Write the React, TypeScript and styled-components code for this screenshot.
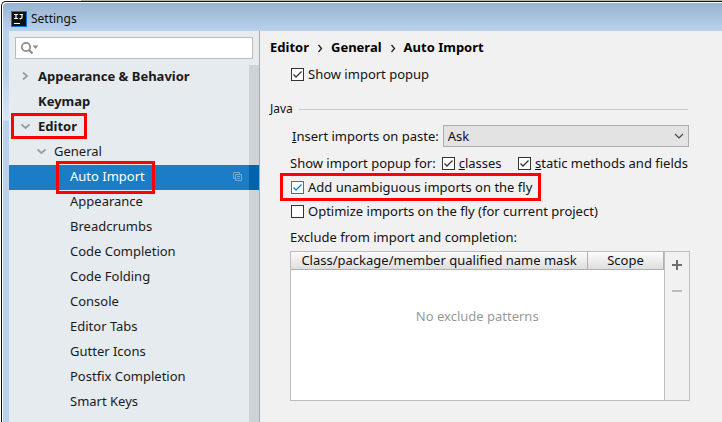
import React from "react";
import styled, { createGlobalStyle } from "styled-components";

const Global = createGlobalStyle`
  *, *::before, *::after { box-sizing: border-box; }
  html, body, #root { height: 100%; }
  body { margin: 0; overflow: hidden; background: #fff; }
  body, button, input, select, table { font: 13px/18px "Noto Sans", "Open Sans", sans-serif; color: #111; }
`;

const Desktop = styled.div`
  height: 100%;
  padding: 1px 0 0 1px;
  background: linear-gradient(90deg, #fff 81px, #b4bab2 81px);
`;

const Window = styled.div`
  display: flex;
  flex-direction: column;
  height: 100%;
  padding: 1px 0 0 1px;
  border: solid #111;
  border-width: 1px 0 0 1px;
  border-top-left-radius: 5px;
  background: #fff;
  overflow: hidden;
`;

const Frame = styled.div`
  flex: 1;
  min-height: 0;
  display: flex;
  flex-direction: column;
  padding-left: 6px;
  border-top-left-radius: 4px;
  background: linear-gradient(#98b3d1, #b9d1ec 28px, #b9d1ec 70px, #d8e5f5 117px, #b9d1ec 118px);
`;

const TitleBar = styled.header`
  display: flex;
  align-items: center;
  gap: 4px;
  height: 28px;
  flex: none;
  padding: 4px 0 0 2px;
`;

const Title = styled.h1`
  margin: 0;
  font-size: 12px;
  font-weight: 400;
`;

const Body = styled.div`
  flex: 1;
  min-height: 0;
  display: flex;
`;

const Sidebar = styled.aside`
  width: 251px;
  flex: none;
  display: flex;
  flex-direction: column;
  background: #e6ebef;
  border-right: 1px solid #aaa;
`;

const SearchBox = styled.label`
  display: flex;
  align-items: center;
  height: 22px;
  flex: none;
  margin: 6px 6px 6px 6px;
  padding-left: 4px;
  border: 1px solid #b9bcbf;
  background: #fff;
`;

const SearchInput = styled.input`
  flex: 1;
  min-width: 0;
  border: 0;
  padding: 0 4px;
  outline: 0;
  background: transparent;
`;

const Tree = styled.ul`
  flex: 1;
  min-height: 0;
  margin: 0;
  padding: 0;
  list-style: none;
  background: linear-gradient(270deg, #cdd3d6 10px, transparent 10px);
`;

const Item = styled.li<{ $level: number; $selected?: boolean }>`
  position: relative;
  display: flex;
  align-items: center;
  gap: 5px;
  height: 25px;
  padding: 0 17px 3px ${(p) => 12 + p.$level * 16}px;
  color: ${(p) => (p.$selected ? "#fff" : "#1a1a1a")};
  font-weight: ${(p) => (p.$level === 0 ? 700 : 400)};
  background: ${(p) => (p.$selected ? "linear-gradient(270deg, #0064ad 10px, #1a7dc5 10px)" : "transparent")};
  > svg { margin-left: auto; }
`;

const ArrowSlot = styled.span`
  display: flex;
  width: 12px;
  flex: none;
`;

const Mark = styled.span<{ $l: number; $w: number; $t: number; $h: number }>`
  position: absolute;
  left: ${(p) => p.$l}px;
  top: ${(p) => p.$t}px;
  width: ${(p) => p.$w}px;
  height: ${(p) => p.$h}px;
  border: 3px solid #f00;
  pointer-events: none;
  z-index: 1;
`;

const Content = styled.main`
  flex: 1;
  min-width: 0;
  padding: 7px 32px 0 10px;
  background: #f1f1f1;
  overflow: hidden;
`;

const Crumbs = styled.nav`
  display: flex;
  gap: 8px;
  font-weight: 700;
  color: #000;
  svg { margin-top: 6px; }
`;

const Check = styled.label`
  display: flex;
  align-items: center;
  gap: 4px;
  white-space: nowrap;
`;

const Box = styled.input<{ $accent?: boolean }>`
  appearance: none;
  width: 13px;
  height: 13px;
  flex: none;
  margin: 0;
  border: 1px solid ${(p) => (p.$accent ? "#1a7dd0" : "#333")};
  background: #fff;
  &:checked {
    background: #fff url("data:image/svg+xml,%3Csvg xmlns='http://www.w3.org/2000/svg' viewBox='0 0 11 11'%3E%3Cpath d='M1.5 5.5 4 8 9.5 2.5' fill='none' stroke='${(p) => (p.$accent ? "%231a7dd0" : "%23333")}' stroke-width='1.3'/%3E%3C/svg%3E");
  }
`;

const PopupRow = styled.div`
  display: flex;
  margin: 9px 0 0 21px;
`;

const Legend = styled.h2`
  display: flex;
  align-items: center;
  gap: 6px;
  margin: 17px 2px 7px 0;
  font-size: 12px;
  font-weight: 400;
  &::after { content: ""; flex: 1; height: 1px; background: #c9c9c9; }
`;

const Section = styled.section`
  padding: 0 0 20px 20px;
  & + ${Legend} { margin-top: 0; }
`;

const Row = styled.div`
  position: relative;
  display: flex;
  align-items: center;
  height: 24px;
`;

const CheckRow = styled(Row)`
  padding-left: 1px;
`;

const PasteRow = styled(Row)`
  height: 22px;
  margin: 0 1px 4px 0;
  gap: 4px;
  label { white-space: nowrap; padding-left: 2px; }
`;

const SelectWrap = styled.div`
  position: relative;
  flex: 1;
  min-width: 0;
  display: flex;
  svg { position: absolute; right: 5px; top: 6px; pointer-events: none; }
`;

const Select = styled.select`
  appearance: none;
  width: 100%;
  height: 22px;
  padding: 0 4px;
  border: 1px solid #adadad;
  border-radius: 0;
  background: #e3e3e3;
`;

const ForRow = styled(Row)`
  justify-content: space-between;
  padding-right: 2px;
`;

const ForGroup = styled.div`
  display: flex;
  gap: 6px;
`;

const Caption = styled.p`
  margin: 5px 0 5px;
`;

const TablePanel = styled.div`
  display: flex;
  height: 150px;
  border: 1px solid #bdbdbd;
`;

const TableArea = styled.div`
  flex: 1;
  min-width: 0;
  background: #fff;
`;

const Table = styled.table`
  width: 100%;
  border-collapse: collapse;
  table-layout: fixed;
  th {
    height: 17px;
    padding: 0;
    font-weight: 400;
    line-height: 16px;
    border-bottom: 1px solid #b0b0b0;
    border-right: 1px solid #b0b0b0;
    background: linear-gradient(#fbfbfb, #dedede);
  }
  th:last-child { width: 76px; }
  td { height: 94px; padding: 0; text-align: center; color: #999; }
`;

const Tools = styled.div`
  width: 25px;
  flex: none;
  display: flex;
  flex-direction: column;
  border-left: 1px solid #bdbdbd;
`;

const ToolButton = styled.button`
  display: grid;
  place-items: center;
  height: 26px;
  padding: 0;
  border: 0;
  background: transparent;
`;

const Arrow = ({ open }: { open?: boolean }) => (
  <svg width="9" height="10" viewBox="0 0 9 10" fill="none" stroke="#9a9da0" strokeWidth="1.8">
    <path d={open ? "M.5 3.5 4.5 7 8.5 3.5" : "M2 1.5 6 5 2 8.5"} />
  </svg>
);

const CrumbArrow = () => (
  <svg width="6" height="9" viewBox="0 0 6 9" fill="none" stroke="#222" strokeWidth="1.3">
    <path d="M1.5 1 4.5 4.5 1.5 8" />
  </svg>
);

const Logo = () => (
  <svg width="16" height="16" viewBox="0 0 16 16">
    <rect x=".5" y=".5" width="15" height="15" fill="#111" stroke="#1573d8" />
    <path d="M3 3.5h4M5 3.5v4M3 7.5h4M8.5 3.5H12M11 3.5v3q0 1.2-1.3 1.2H8.5M3 12.5h6" stroke="#fff" strokeWidth="1.2" fill="none" />
  </svg>
);

const items = [
  "Appearance", "Breadcrumbs", "Code Completion", "Code Folding", "Console",
  "Editor Tabs", "Gutter Icons", "Postfix Completion", "Smart Keys",
];

export default function App() {
  return (
    <Desktop>
      <Global />
      <Window>
        <Frame>
          <TitleBar>
            <Logo />
            <Title>Settings</Title>
          </TitleBar>
          <Body>
            <Sidebar>
              <SearchBox>
                <svg width="20" height="14" viewBox="0 0 20 14">
                  <circle cx="6" cy="6" r="4.2" fill="none" stroke="#8c8c8c" strokeWidth="1.8" />
                  <path d="M9 9 12.5 12.5" stroke="#8c8c8c" strokeWidth="2.2" />
                  <path d="M12.5 4.5h6L15.5 8z" fill="#8c8c8c" />
                </svg>
                <SearchInput type="text" aria-label="Search settings" />
              </SearchBox>
              <Tree>
                <Item $level={0}><ArrowSlot><Arrow /></ArrowSlot>Appearance &amp; Behavior</Item>
                <Item $level={0}><ArrowSlot />Keymap</Item>
                <Item $level={0}><Mark $l={2} $w={76} $t={-2} $h={26} /><ArrowSlot><Arrow open /></ArrowSlot>Editor</Item>
                <Item $level={1}><ArrowSlot><Arrow open /></ArrowSlot>General</Item>
                <Item $level={2} $selected>
                  <Mark $l={47} $w={99} $t={-4} $h={33} />
                  <ArrowSlot />Auto Import
                  <svg width="9" height="9" viewBox="0 0 9 9" fill="none" stroke="#7fa9cb">
                    <path d="M2.5 6.5H.5V.5H6.5V2.5M2.5 2.5H8.5V8.5H2.5ZM4 4.5H7M4 6.5H7" />
                  </svg>
                </Item>
                {items.map((name) => (
                  <Item key={name} $level={2}><ArrowSlot />{name}</Item>
                ))}
              </Tree>
            </Sidebar>
            <Content>
              <Crumbs aria-label="Breadcrumb">
                <span>Editor</span><CrumbArrow /><span>General</span><CrumbArrow /><span>Auto Import</span>
              </Crumbs>
              <PopupRow>
                <Check><Box type="checkbox" defaultChecked />Show import popup</Check>
              </PopupRow>
              <Legend>Java</Legend>
              <Section>
                <PasteRow>
                  <label htmlFor="paste"><u>I</u>nsert imports on paste:</label>
                  <SelectWrap>
                    <Select id="paste" defaultValue="Ask"><option>Ask</option></Select>
                    <svg width="10" height="10" viewBox="0 0 10 10" fill="none" stroke="#444" strokeWidth="1.2">
                      <path d="M1 3 5 7 9 3" />
                    </svg>
                  </SelectWrap>
                </PasteRow>
                <ForRow>
                  <ForGroup>
                    <span>Show import popup for:</span>
                    <Check><Box type="checkbox" defaultChecked /><span><u>c</u>lasses</span></Check>
                  </ForGroup>
                  <Check><Box type="checkbox" defaultChecked /><span><u>s</u>tatic methods and fields</span></Check>
                </ForRow>
                <CheckRow>
                  <Mark $l={-10} $w={261} $t={-2} $h={28} />
                  <Check><Box type="checkbox" $accent defaultChecked />Add unambiguous imports on the fly</Check>
                </CheckRow>
                <CheckRow>
                  <Check><Box type="checkbox" />Optimize imports on the fly (for current project)</Check>
                </CheckRow>
                <Caption>Exclude from import and completion:</Caption>
                <TablePanel>
                  <TableArea>
                    <Table>
                      <thead><tr><th scope="col">Class/package/member qualified name mask</th><th scope="col">Scope</th></tr></thead>
                      <tbody><tr><td colSpan={2}>No exclude patterns</td></tr></tbody>
                    </Table>
                  </TableArea>
                  <Tools>
                    <ToolButton aria-label="Add">
                      <svg width="10" height="10" viewBox="0 0 10 10" stroke="#6e6e6e" strokeWidth="2"><path d="M0 5H10M5 0V10" /></svg>
                    </ToolButton>
                    <ToolButton aria-label="Remove" disabled>
                      <svg width="10" height="10" viewBox="0 0 10 10" stroke="#bdbdbd" strokeWidth="2"><path d="M0 5H10" /></svg>
                    </ToolButton>
                  </Tools>
                </TablePanel>
              </Section>
              <Legend>TypeScript / JavaScript</Legend>
            </Content>
          </Body>
        </Frame>
      </Window>
    </Desktop>
  );
}
